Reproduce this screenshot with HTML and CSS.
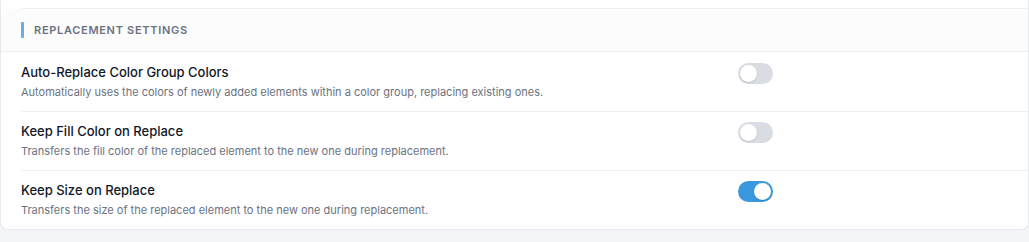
FILE: index.html
```html
<!DOCTYPE html>
<html lang="en">
<head>
<meta charset="utf-8">
<link rel="stylesheet" href="styles.css">
</head>
<body>
<div class="card">
  <div class="prev-row"></div>
  <div class="section-header">
    <span class="bar"></span>
    <span class="section-title">Replacement Settings</span>
  </div>
  <div class="row first">
    <div class="label">
      <div class="title">Auto-Replace Color Group Colors</div>
      <div class="desc">Automatically uses the colors of newly added elements within a color group, replacing existing ones.</div>
    </div>
    <div class="control"><span class="toggle"><span class="knob"></span></span></div>
  </div>
  <div class="row">
    <div class="label">
      <div class="title">Keep Fill Color on Replace</div>
      <div class="desc">Transfers the fill color of the replaced element to the new one during replacement.</div>
    </div>
    <div class="control"><span class="toggle"><span class="knob"></span></span></div>
  </div>
  <div class="row last">
    <div class="label">
      <div class="title">Keep Size on Replace</div>
      <div class="desc">Transfers the size of the replaced element to the new one during replacement.</div>
    </div>
    <div class="control"><span class="toggle on"><span class="knob"></span></span></div>
  </div>
</div>
</body>
</html>
```
FILE: styles.css
```css
html, body {
  margin: 0;
  padding: 0;
  background: #f4f5f8;
  font-family: Inter, "Noto Sans", sans-serif;
}
.card {
  margin-top: -12px;
  width: 1027px;
  background: #ffffff;
  border: 1px solid #e8e9ed;
  border-radius: 8px;
  box-shadow: 0 1px 2px rgba(0,0,0,0.03);
  overflow: hidden;
}
.prev-row {
  height: 19px;
  margin-left: 20px;
  border-bottom: 1px solid #eceef1;
}
.section-header {
  height: 43px;
  background: #fcfcfd;
  border-bottom: 1px solid #eef0f2;
  display: flex;
  align-items: center;
  padding-left: 20px;
  box-sizing: border-box;
}
.bar {
  width: 3px;
  height: 16px;
  border-radius: 1px;
  background: #6aade0;
  margin-right: 10px;
}
.section-title {
  text-transform: uppercase;
  font-size: 11px;
  font-weight: 600;
  letter-spacing: 0.7px;
  color: #6b7280;
}
.row {
  margin-left: 20px;
  display: grid;
  grid-template-columns: 717px 1fr;
  padding: 9px 0 0;
  border-bottom: 1px solid #eff0f2;
  height: 59px;
  box-sizing: border-box;
}
.row.first {
  height: 60px;
  padding-top: 10px;
}
.row.last {
  border-bottom: none;
  height: 58px;
}
.title {
  font-size: 13px;
  line-height: 20px;
  font-weight: 500;
  color: #111827;
}
.desc {
  margin-top: 3px;
  font-size: 11px;
  line-height: 14px;
  color: #6b7280;
}
.control {
  padding-top: 1px;
}
.toggle {
  display: block;
  width: 35px;
  height: 21px;
  border-radius: 11px;
  background: #d9dce3;
  position: relative;
}
.knob {
  position: absolute;
  top: 2px;
  left: 2px;
  width: 17px;
  height: 17px;
  border-radius: 50%;
  background: #ffffff;
  box-shadow: 0 1px 2px rgba(0,0,0,0.12);
}
.toggle.on {
  background: #3a98df;
}
.toggle.on .knob {
  left: 16px;
}
```
